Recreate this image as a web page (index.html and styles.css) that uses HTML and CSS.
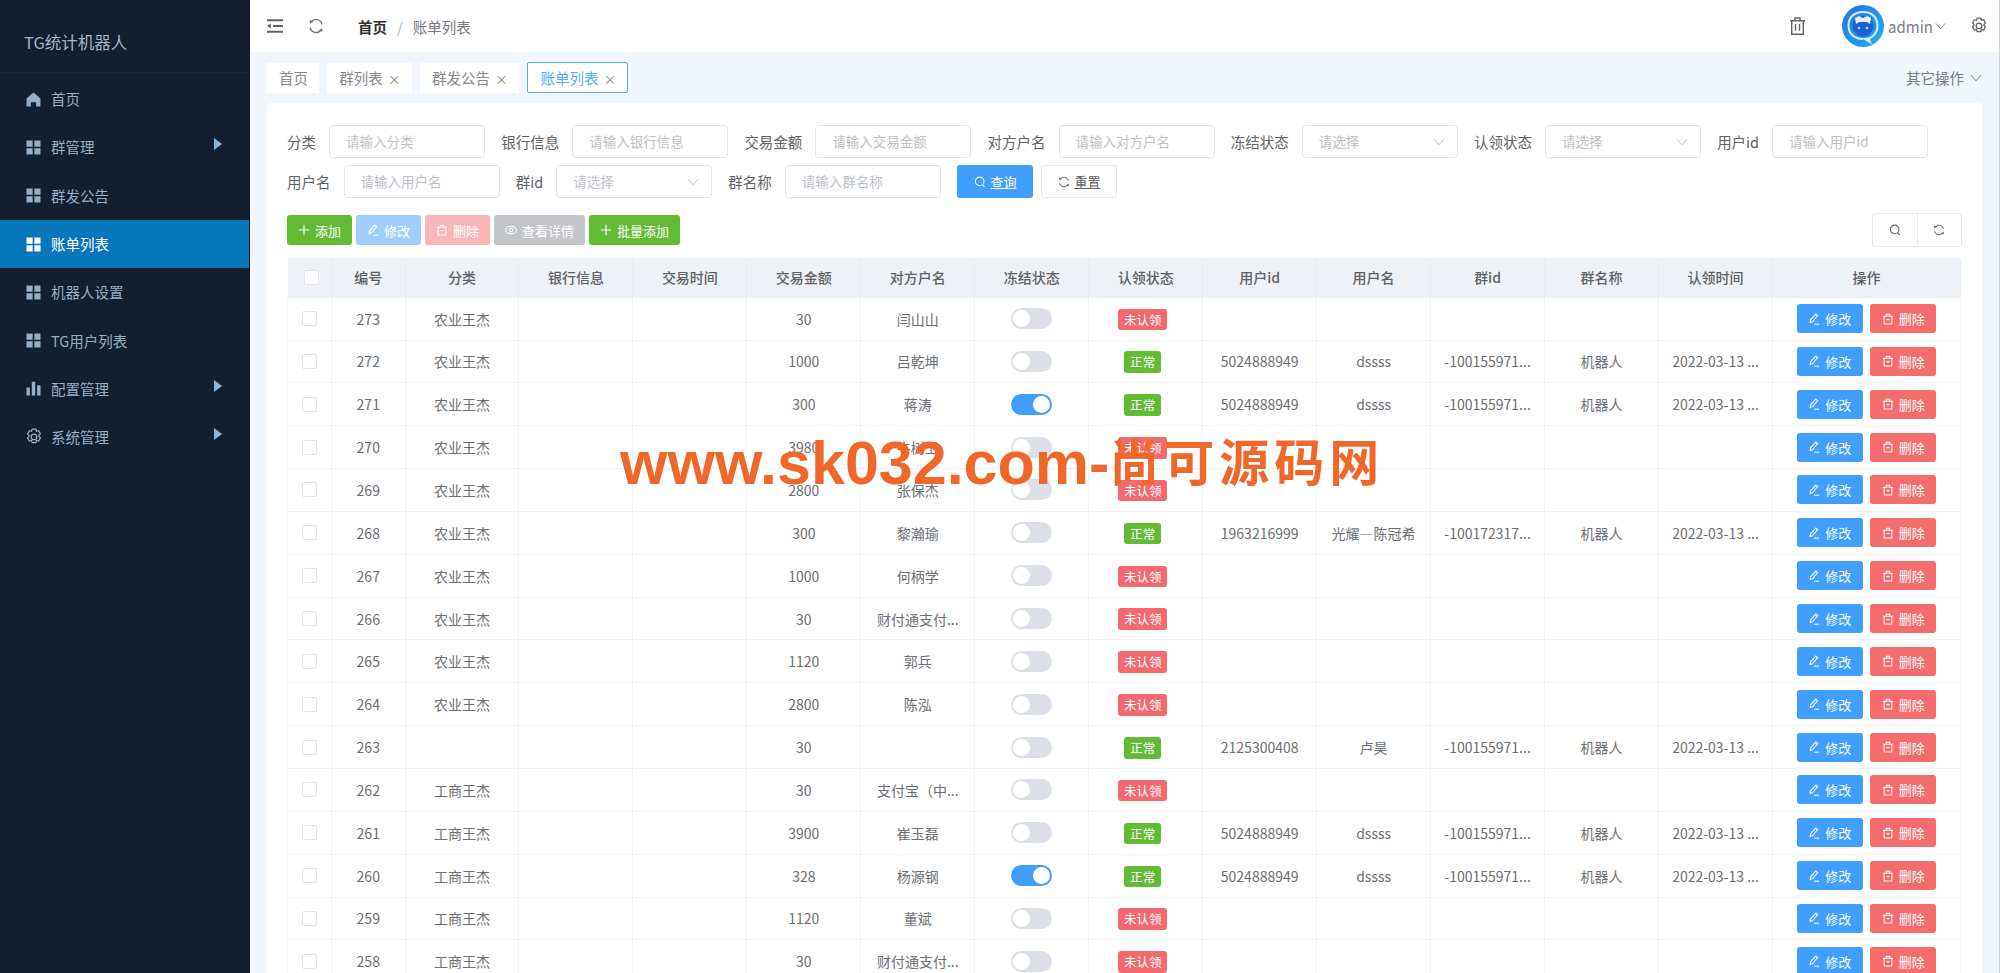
FILE: index.html
```html
<!DOCTYPE html>
<html lang="zh-CN">
<head>
    <meta charset="UTF-8">
    <meta name="viewport" content="width=device-width, initial-scale=1.0">
    <title>账单列表 - TG统计机器人</title>
    <link rel="stylesheet" href="styles.css">
</head>
<body>
    <svg class="sprite" xmlns="http://www.w3.org/2000/svg">
        <symbol id="i-home" viewBox="0 0 16 16"><path d="M8 .6 15.4 7v8.4h-4.6v-4.6H5.2v4.6H.6V7z" fill="currentColor"/></symbol>
        <symbol id="i-grid" viewBox="0 0 16 16"><path d="M.5.5h6.6v6.6H.5zM8.9.5h6.6v6.6H8.9zM.5 8.9h6.6v6.6H.5zM8.9 8.9h6.6v6.6H8.9z" fill="currentColor"/></symbol>
        <symbol id="i-bars" viewBox="0 0 16 16"><path d="M.5 7h3.6v8.5H.5zM6.2.8h3.6v14.7H6.2zM11.9 4.6h3.6v10.9h-3.6z" fill="currentColor"/></symbol>
        <symbol id="i-gear" viewBox="0 0 16 16"><g fill="none" stroke="currentColor" stroke-width="1.1"><path d="M6.4 1h3.2l.6 1.9 1.9-.5 1.6 2.8-1.3 1.4.1.4-.1.4 1.3 1.4-1.6 2.8-1.9-.5-.6 1.9H6.4l-.6-1.9-1.9.5-1.6-2.8 1.3-1.4-.1-.4.1-.4L2.3 5.2l1.6-2.8 1.9.5z"/><circle cx="8" cy="7.900" r="2.500"/></g></symbol>
        <symbol id="i-fold" viewBox="0 0 16 14"><path d="M0 .2h16v2.100H0zM0 11.700h16v2.100H0zM6 5.900h10v2.100H6z" fill="currentColor"/><path d="M0 7l3.800-2.500v5z" fill="currentColor"/></symbol>
        <symbol id="i-refresh" viewBox="0 0 16 16"><g fill="none" stroke="currentColor" stroke-width="1.3"><path d="M2 9.500A6.200 6.200 0 0 0 13 12"/><path d="M14 6.500A6.200 6.200 0 0 0 3 4"/></g><path d="M10.600 12.600 14.400 14l-.3-4zM5.400 3.400 1.600 2l.3 4z" fill="currentColor"/></symbol>
        <symbol id="i-trash" viewBox="0 0 16 18"><g fill="none" stroke="currentColor" stroke-width="1.4"><path d="M.5 3.700h15M5.400 3.700V1h5.200v2.700M2.200 3.700v13.600h11.600V3.700M6 7v6.800M10 7v6.800"/></g></symbol>
        <symbol id="i-search" viewBox="0 0 14 14"><g fill="none" stroke="currentColor" stroke-width="1.2"><circle cx="6.600" cy="6.300" r="5"/><path d="m10 10 2.200 2.600"/></g></symbol>
        <symbol id="i-edit" viewBox="0 0 14 14"><g fill="none" stroke="currentColor" stroke-width="1.2"><path d="M9.200 1.200 11.300 3 5.200 10.200l-2.700.8.300-2.800z"/><path d="M7 13h6"/></g></symbol>
        <symbol id="i-del" viewBox="0 0 14 14"><g fill="none" stroke="currentColor" stroke-width="1.2"><path d="M1 3.800h12M5 3.800V1.400h4v2.400M2.500 3.800v9h9v-9"/><path d="M5 7.800h4"/></g></symbol>
        <symbol id="i-eye" viewBox="0 0 14 14"><g fill="none" stroke="currentColor" stroke-width="1.2"><ellipse cx="7" cy="7" rx="6.200" ry="4.300"/><circle cx="7" cy="7" r="2"/></g></symbol>
        <symbol id="i-plus" viewBox="0 0 14 14"><path d="M7 1v12M1 7h12" fill="none" stroke="currentColor" stroke-width="1.3"/></symbol>
        <symbol id="i-down" viewBox="0 0 12 8"><path d="M1 1.200 6 6.800l5-5.600" fill="none" stroke="currentColor" stroke-width="1"/></symbol>
    </svg>

    <div class="app">
        <aside class="sidebar">
            <div class="logo">TG统计机器人</div>
            <ul class="menu">
                <li class="menu-item"><svg class="menu-icon"><use href="#i-home"/></svg>首页</li>
                <li class="menu-item has-sub"><svg class="menu-icon"><use href="#i-grid"/></svg>群管理</li>
                <li class="menu-item"><svg class="menu-icon"><use href="#i-grid"/></svg>群发公告</li>
                <li class="menu-item active"><svg class="menu-icon"><use href="#i-grid"/></svg>账单列表</li>
                <li class="menu-item"><svg class="menu-icon"><use href="#i-grid"/></svg>机器人设置</li>
                <li class="menu-item"><svg class="menu-icon"><use href="#i-grid"/></svg>TG用户列表</li>
                <li class="menu-item has-sub"><svg class="menu-icon"><use href="#i-bars"/></svg>配置管理</li>
                <li class="menu-item has-sub"><svg class="menu-icon gear"><use href="#i-gear"/></svg>系统管理</li>
            </ul>
        </aside>

        <main class="main">
            <header class="navbar">
                <svg class="nav-fold"><use href="#i-fold"/></svg>
                <svg class="nav-refresh"><use href="#i-refresh"/></svg>
                <div class="crumbs"><b>首页</b><span class="crumb-sep">/</span><span>账单列表</span></div>
                <svg class="nav-trash"><use href="#i-trash"/></svg>
                <svg class="avatar" viewBox="0 0 42 42" xmlns="http://www.w3.org/2000/svg">
                    <defs>
                        <linearGradient id="av" x1="0" y1="0" x2="1" y2="1">
                            <stop offset="0" stop-color="#2a6fe0"/>
                            <stop offset="1" stop-color="#1cb4ee"/>
                        </linearGradient>
                    </defs>
                    <circle cx="21" cy="21" r="21" fill="url(#av)"/>
                    <path d="M21 7c9 0 14.500 5.500 14.500 13.500S30 34 23 34l5 3-1-3" fill="none" stroke="#d4f0ff" stroke-width="2"/>
                    <path d="M21 34C12 34 6.500 28.500 6.500 20.500S12 7 21 7" fill="none" stroke="#d4f0ff" stroke-width="2"/>
                    <circle cx="21" cy="21" r="10.500" fill="#1d62d0"/>
                    <path d="M13 13l4-2 4 2 4-2 4 2-1 6-3-2h-8l-3 2z" fill="#e8f4ff"/>
                    <circle cx="17" cy="23" r="1.300" fill="#9fd4ff"/>
                    <circle cx="25" cy="23" r="1.300" fill="#9fd4ff"/>
                </svg>
                <span class="nav-user">admin</span>
                <svg class="nav-down"><use href="#i-down"/></svg>
                <svg class="nav-gear"><use href="#i-gear"/></svg>
            </header>

            <div class="tabs">
                <span class="tab">首页</span>
                <span class="tab">群列表<i class="tab-x">×</i></span>
                <span class="tab">群发公告<i class="tab-x">×</i></span>
                <span class="tab current">账单列表<i class="tab-x">×</i></span>
                <span class="tabs-more">其它操作<svg class="more-down"><use href="#i-down"/></svg></span>
            </div>

            <section class="card">
                <form class="filters">
                    <label class="field">分类<span class="input">请输入分类</span></label>
                    <label class="field">银行信息<span class="input">请输入银行信息</span></label>
                    <label class="field">交易金额<span class="input">请输入交易金额</span></label>
                    <label class="field">对方户名<span class="input">请输入对方户名</span></label>
                    <label class="field">冻结状态<span class="input select">请选择<svg class="select-arrow"><use href="#i-down"/></svg></span></label>
                    <label class="field">认领状态<span class="input select">请选择<svg class="select-arrow"><use href="#i-down"/></svg></span></label>
                    <label class="field">用户id<span class="input">请输入用户id</span></label>
                    <label class="field">用户名<span class="input">请输入用户名</span></label>
                    <label class="field">群id<span class="input select">请选择<svg class="select-arrow"><use href="#i-down"/></svg></span></label>
                    <label class="field">群名称<span class="input">请输入群名称</span></label>
                    <div class="filter-btns">
                        <span class="btn-query"><svg class="btn-icon"><use href="#i-search"/></svg>查询</span>
                        <span class="btn-reset"><svg class="btn-icon"><use href="#i-refresh"/></svg>重置</span>
                    </div>
                </form>

                <div class="toolbar">
                    <div class="tool-btns">
                        <span class="btn green"><svg class="btn-icon"><use href="#i-plus"/></svg>添加</span>
                        <span class="btn blue-off"><svg class="btn-icon"><use href="#i-edit"/></svg>修改</span>
                        <span class="btn red-off"><svg class="btn-icon"><use href="#i-del"/></svg>删除</span>
                        <span class="btn grey-off"><svg class="btn-icon"><use href="#i-eye"/></svg>查看详情</span>
                        <span class="btn green"><svg class="btn-icon"><use href="#i-plus"/></svg>批量添加</span>
                    </div>
                    <div class="tool-right">
                        <span class="tool-square"><svg class="btn-icon"><use href="#i-search"/></svg></span>
                        <span class="tool-square"><svg class="btn-icon"><use href="#i-refresh"/></svg></span>
                    </div>
                </div>

                <table class="grid">
                    <colgroup>
                        <col class="col-check"><col class="col-no"><col span="12"><col class="col-ops">
                    </colgroup>
                    <thead>
                        <tr>
                            <th><span class="check head-check"></span></th>
                            <th>编号</th><th>分类</th><th>银行信息</th><th>交易时间</th><th>交易金额</th><th>对方户名</th>
                            <th>冻结状态</th><th>认领状态</th><th>用户id</th><th>用户名</th><th>群id</th><th>群名称</th><th>认领时间</th><th>操作</th>
                        </tr>
                    </thead>
                    <tbody>
                        <tr><td><span class="check"></span></td><td>273</td><td>农业王杰</td><td></td><td></td><td>30</td><td>闫山山</td><td><span class="switch"></span></td><td><span class="tag no">未认领</span></td><td></td><td></td><td></td><td></td><td></td><td><span class="op edit"><svg class="btn-icon"><use href="#i-edit"/></svg>修改</span><span class="op del"><svg class="btn-icon"><use href="#i-del"/></svg>删除</span></td></tr>
                        <tr><td><span class="check"></span></td><td>272</td><td>农业王杰</td><td></td><td></td><td>1000</td><td>吕乾坤</td><td><span class="switch"></span></td><td><span class="tag ok">正常</span></td><td>5024888949</td><td>dssss</td><td>-100155971...</td><td>机器人</td><td>2022-03-13 ...</td><td><span class="op edit"><svg class="btn-icon"><use href="#i-edit"/></svg>修改</span><span class="op del"><svg class="btn-icon"><use href="#i-del"/></svg>删除</span></td></tr>
                        <tr><td><span class="check"></span></td><td>271</td><td>农业王杰</td><td></td><td></td><td>300</td><td>蒋涛</td><td><span class="switch on"></span></td><td><span class="tag ok">正常</span></td><td>5024888949</td><td>dssss</td><td>-100155971...</td><td>机器人</td><td>2022-03-13 ...</td><td><span class="op edit"><svg class="btn-icon"><use href="#i-edit"/></svg>修改</span><span class="op del"><svg class="btn-icon"><use href="#i-del"/></svg>删除</span></td></tr>
                        <tr><td><span class="check"></span></td><td>270</td><td>农业王杰</td><td></td><td></td><td>3980</td><td>牛树卫</td><td><span class="switch"></span></td><td><span class="tag no">未认领</span></td><td></td><td></td><td></td><td></td><td></td><td><span class="op edit"><svg class="btn-icon"><use href="#i-edit"/></svg>修改</span><span class="op del"><svg class="btn-icon"><use href="#i-del"/></svg>删除</span></td></tr>
                        <tr><td><span class="check"></span></td><td>269</td><td>农业王杰</td><td></td><td></td><td>2800</td><td>张保杰</td><td><span class="switch"></span></td><td><span class="tag no">未认领</span></td><td></td><td></td><td></td><td></td><td></td><td><span class="op edit"><svg class="btn-icon"><use href="#i-edit"/></svg>修改</span><span class="op del"><svg class="btn-icon"><use href="#i-del"/></svg>删除</span></td></tr>
                        <tr><td><span class="check"></span></td><td>268</td><td>农业王杰</td><td></td><td></td><td>300</td><td>黎瀚瑜</td><td><span class="switch"></span></td><td><span class="tag ok">正常</span></td><td>1963216999</td><td>光耀—陈冠希</td><td>-100172317...</td><td>机器人</td><td>2022-03-13 ...</td><td><span class="op edit"><svg class="btn-icon"><use href="#i-edit"/></svg>修改</span><span class="op del"><svg class="btn-icon"><use href="#i-del"/></svg>删除</span></td></tr>
                        <tr><td><span class="check"></span></td><td>267</td><td>农业王杰</td><td></td><td></td><td>1000</td><td>何柄学</td><td><span class="switch"></span></td><td><span class="tag no">未认领</span></td><td></td><td></td><td></td><td></td><td></td><td><span class="op edit"><svg class="btn-icon"><use href="#i-edit"/></svg>修改</span><span class="op del"><svg class="btn-icon"><use href="#i-del"/></svg>删除</span></td></tr>
                        <tr><td><span class="check"></span></td><td>266</td><td>农业王杰</td><td></td><td></td><td>30</td><td>财付通支付...</td><td><span class="switch"></span></td><td><span class="tag no">未认领</span></td><td></td><td></td><td></td><td></td><td></td><td><span class="op edit"><svg class="btn-icon"><use href="#i-edit"/></svg>修改</span><span class="op del"><svg class="btn-icon"><use href="#i-del"/></svg>删除</span></td></tr>
                        <tr><td><span class="check"></span></td><td>265</td><td>农业王杰</td><td></td><td></td><td>1120</td><td>郭兵</td><td><span class="switch"></span></td><td><span class="tag no">未认领</span></td><td></td><td></td><td></td><td></td><td></td><td><span class="op edit"><svg class="btn-icon"><use href="#i-edit"/></svg>修改</span><span class="op del"><svg class="btn-icon"><use href="#i-del"/></svg>删除</span></td></tr>
                        <tr><td><span class="check"></span></td><td>264</td><td>农业王杰</td><td></td><td></td><td>2800</td><td>陈泓</td><td><span class="switch"></span></td><td><span class="tag no">未认领</span></td><td></td><td></td><td></td><td></td><td></td><td><span class="op edit"><svg class="btn-icon"><use href="#i-edit"/></svg>修改</span><span class="op del"><svg class="btn-icon"><use href="#i-del"/></svg>删除</span></td></tr>
                        <tr><td><span class="check"></span></td><td>263</td><td></td><td></td><td></td><td>30</td><td></td><td><span class="switch"></span></td><td><span class="tag ok">正常</span></td><td>2125300408</td><td>卢昊</td><td>-100155971...</td><td>机器人</td><td>2022-03-13 ...</td><td><span class="op edit"><svg class="btn-icon"><use href="#i-edit"/></svg>修改</span><span class="op del"><svg class="btn-icon"><use href="#i-del"/></svg>删除</span></td></tr>
                        <tr><td><span class="check"></span></td><td>262</td><td>工商王杰</td><td></td><td></td><td>30</td><td>支付宝（中...</td><td><span class="switch"></span></td><td><span class="tag no">未认领</span></td><td></td><td></td><td></td><td></td><td></td><td><span class="op edit"><svg class="btn-icon"><use href="#i-edit"/></svg>修改</span><span class="op del"><svg class="btn-icon"><use href="#i-del"/></svg>删除</span></td></tr>
                        <tr><td><span class="check"></span></td><td>261</td><td>工商王杰</td><td></td><td></td><td>3900</td><td>崔玉磊</td><td><span class="switch"></span></td><td><span class="tag ok">正常</span></td><td>5024888949</td><td>dssss</td><td>-100155971...</td><td>机器人</td><td>2022-03-13 ...</td><td><span class="op edit"><svg class="btn-icon"><use href="#i-edit"/></svg>修改</span><span class="op del"><svg class="btn-icon"><use href="#i-del"/></svg>删除</span></td></tr>
                        <tr><td><span class="check"></span></td><td>260</td><td>工商王杰</td><td></td><td></td><td>328</td><td>杨源钢</td><td><span class="switch on"></span></td><td><span class="tag ok">正常</span></td><td>5024888949</td><td>dssss</td><td>-100155971...</td><td>机器人</td><td>2022-03-13 ...</td><td><span class="op edit"><svg class="btn-icon"><use href="#i-edit"/></svg>修改</span><span class="op del"><svg class="btn-icon"><use href="#i-del"/></svg>删除</span></td></tr>
                        <tr><td><span class="check"></span></td><td>259</td><td>工商王杰</td><td></td><td></td><td>1120</td><td>董斌</td><td><span class="switch"></span></td><td><span class="tag no">未认领</span></td><td></td><td></td><td></td><td></td><td></td><td><span class="op edit"><svg class="btn-icon"><use href="#i-edit"/></svg>修改</span><span class="op del"><svg class="btn-icon"><use href="#i-del"/></svg>删除</span></td></tr>
                        <tr><td><span class="check"></span></td><td>258</td><td>工商王杰</td><td></td><td></td><td>30</td><td>财付通支付...</td><td><span class="switch"></span></td><td><span class="tag no">未认领</span></td><td></td><td></td><td></td><td></td><td></td><td><span class="op edit"><svg class="btn-icon"><use href="#i-edit"/></svg>修改</span><span class="op del"><svg class="btn-icon"><use href="#i-del"/></svg>删除</span></td></tr>
                    </tbody>
                </table>
            </section>
        </main>
    </div>

    <div class="watermark"><span class="wm-latin">www.sk032.com-</span><span class="wm-cjk">尚可源码网</span></div>
</body>
</html>
```

FILE: styles.css
```css
:root {
    --side-bg: #131f2e;
    --side-text: #98aec4;
    --page-bg: #f1f5fc;
    --text: #606266;
    --line: #eef1f6;
    --blue: #409eff;
    --red: #f56c6c;
    --green: #62bb35;
}

html, body {
    height: 100%;
}

body {
    margin: 0;
    overflow: hidden;
    position: relative;
    font-family: "Noto Sans CJK SC", "Liberation Sans", sans-serif;
    font-size: 14px;
    color: var(--text);
    background: var(--page-bg);
}

.sprite {
    display: none;
}

.app {
    display: flex;
    height: 973px;
    overflow: hidden;
    border-right: 1px solid #cfd2d6;
}

/* 左侧菜单 */
.sidebar {
    flex: 0 0 250px;
    background: var(--side-bg);
    border-right: 1px solid #0f1824;
    box-sizing: border-box;
}

.logo {
    height: 73px;
    line-height: 84px;
    padding-left: 24px;
    font-size: 16.5px;
    color: #a6b4c2;
    border-bottom: 1px solid #18263a;
    box-sizing: border-box;
}

.menu {
    list-style: none;
    margin: 2px 0 0;
    padding: 0;
}

.menu-item {
    height: 48.3px;
    line-height: 46px;
    display: flex;
    align-items: center;
    padding-left: 26px;
    font-size: 14.5px;
    color: var(--side-text);
    position: relative;
}

.menu-item.active {
    background: #0776bb;
    color: #fff;
}

.menu-icon {
    width: 15px;
    height: 15px;
    margin-right: 10px;
    flex: none;
}

.menu-icon.gear {
    width: 18px;
    height: 18px;
    margin: 0 8px 0 -1px;
}

.has-sub::after {
    content: "";
    position: absolute;
    left: 214px;
    top: 15px;
    border-left: 8px solid #8fb4d6;
    border-top: 6px solid transparent;
    border-bottom: 6px solid transparent;
}

/* 顶部 */
.main {
    flex: 1;
    min-width: 0;
    display: flex;
    flex-direction: column;
}

.navbar {
    flex: 0 0 52px;
    background: #fff;
    display: flex;
    align-items: center;
    padding: 0 11px 0 17px;
    color: #606266;
}

.nav-fold {
    width: 16px;
    height: 14px;
    margin-right: 25px;
}

.nav-refresh {
    width: 16px;
    height: 16px;
    margin-right: 34px;
    color: #777;
}

.crumbs {
    flex: 1;
    display: flex;
    align-items: center;
    font-size: 14.5px;
    color: #777a80;
}

.crumbs b {
    color: #303133;
}

.crumb-sep {
    margin: 0 10px;
    color: #b0b3b8;
}

.nav-trash {
    width: 17px;
    height: 18px;
    margin-right: 36px;
}

.avatar {
    width: 42px;
    height: 42px;
    margin-right: 4px;
}

.nav-user {
    font-size: 15px;
    color: #77797d;
}

.nav-down {
    width: 11px;
    height: 8px;
    margin: 0 24px 0 2px;
    color: #777;
}

.nav-gear {
    width: 18px;
    height: 18px;
}

/* 标签页 */
.tabs {
    flex: 0 0 51px;
    display: flex;
    align-items: center;
    gap: 8.3px;
    padding: 0 17px;
    box-sizing: border-box;
}

.tab {
    height: 30px;
    line-height: 30px;
    padding: 0 11px 0 12px;
    background: #fff;
    color: #85888e;
    font-size: 14.5px;
    white-space: nowrap;
}

.tab.current {
    color: #5aa9f5;
    border: 1px solid #5aa9f5;
    height: 31px;
    line-height: 29px;
    box-sizing: border-box;
    border-radius: 2px;
}

.tab-x {
    font-style: normal;
    font-size: 13px;
    margin-left: 5px;
    color: #888;
}

.tabs-more {
    margin-left: auto;
    display: flex;
    align-items: center;
    font-size: 14.5px;
    color: #777a80;
}

.more-down {
    width: 12px;
    height: 8px;
    margin-left: 6px;
}

/* 内容卡片 */
.card {
    flex: 1;
    background: #fff;
    border-radius: 4px 4px 0 0;
    margin: 0 17px;
    padding: 22px 20px 0;
    box-sizing: border-box;
    overflow: hidden;
}

.filters {
    display: flex;
    flex-wrap: wrap;
    gap: 7px 16.2px;
}

.field {
    display: flex;
    align-items: center;
    gap: 13px;
    font-size: 14.5px;
    color: #606266;
    white-space: nowrap;
}

.input {
    width: 156px;
    height: 33px;
    line-height: 31px;
    box-sizing: border-box;
    border: 1px solid #dfe3ea;
    border-radius: 4px;
    padding: 0 16px;
    font-size: 13.5px;
    color: #bcc0c7;
    position: relative;
}

.select-arrow {
    position: absolute;
    right: 12px;
    top: 12px;
    width: 12px;
    height: 8px;
    color: #b8bcc4;
}

.filter-btns {
    display: flex;
    gap: 8px;
}

.btn-query,
.btn-reset {
    height: 33px;
    width: 76px;
    box-sizing: border-box;
    border-radius: 3px;
    display: flex;
    align-items: center;
    justify-content: center;
    font-size: 13px;
    text-decoration: underline;
}

.btn-query {
    background: var(--blue);
    color: #fff;
}

.btn-reset {
    border: 1px solid #e2e5ea;
    color: #606266;
}

.btn-icon {
    width: 12px;
    height: 12px;
    margin-right: 5px;
    flex: none;
}

.toolbar {
    display: flex;
    justify-content: space-between;
    align-items: center;
    margin-top: 15px;
    height: 34px;
}

.tool-btns {
    display: flex;
    gap: 4px;
}

.btn {
    height: 30px;
    padding: 0 11px;
    box-sizing: border-box;
    border-radius: 3px;
    display: flex;
    align-items: center;
    font-size: 13px;
    color: #fff;
}

.green {
    background: var(--green);
}

.blue-off {
    background: #a0cfff;
}

.red-off {
    background: #fab6b6;
}

.grey-off {
    background: #c3c5c9;
}

.tool-right {
    width: 90px;
    height: 34px;
    box-sizing: border-box;
    border: 1px solid #e6e8ec;
    border-radius: 3px;
    display: flex;
    color: #606266;
}

.tool-square {
    flex: 1;
    display: flex;
    align-items: center;
    justify-content: center;
}

.tool-square + .tool-square {
    border-left: 1px solid #e6e8ec;
}

.tool-square .btn-icon {
    margin: 0;
}

/* 表格 */
.grid {
    width: 1674px;
    margin-top: 10.7px;
    table-layout: fixed;
    border-collapse: collapse;
}

.col-check {
    width: 44px;
}

.col-no {
    width: 73.5px;
}

.col-ops {
    width: 188px;
}

.grid th,
.grid td {
    padding: 0;
    text-align: center;
    white-space: nowrap;
    overflow: hidden;
    border-bottom: 1px solid var(--line);
    border-right: 1px solid var(--line);
    font-size: 14px;
}

.grid th {
    height: 39px;
    background: #eef1f6;
    font-weight: 500;
    color: #5e6166;
    border-color: #e9ecf1;
}

.grid td {
    height: 41.85px;
    color: #6b6e73;
}

.grid td:first-child {
    border-left: 1px solid var(--line);
}

.check {
    display: block;
    width: 15px;
    height: 15px;
    margin: 0 auto;
    box-sizing: border-box;
    border: 1px solid #dfe2e8;
    border-radius: 2px;
    background: #fff;
}

.head-check {
    position: relative;
    left: 2px;
}

.switch {
    display: block;
    width: 41.5px;
    height: 21px;
    margin: 0 auto;
    border-radius: 11px;
    background: #dcdfe6;
    position: relative;
}

.switch::after {
    content: "";
    position: absolute;
    left: 2px;
    top: 2px;
    width: 17px;
    height: 17px;
    border-radius: 50%;
    background: #fff;
}

.switch.on {
    background: var(--blue);
}

.switch.on::after {
    left: 22.5px;
}

.tag {
    display: inline-block;
    height: 21.5px;
    line-height: 21.5px;
    padding: 0 6px;
    margin-right: 6px;
    border-radius: 3px;
    color: #fff;
    font-size: 12.5px;
    vertical-align: middle;
}

.tag.no {
    background: #f4696d;
}

.tag.ok {
    background: var(--green);
}

.op {
    display: inline-flex;
    align-items: center;
    justify-content: center;
    width: 66px;
    height: 29px;
    border-radius: 3px;
    color: #fff;
    font-size: 13px;
    vertical-align: middle;
}

.op + .op {
    margin-left: 7.5px;
}

.edit {
    background: var(--blue);
}

.del {
    background: #f56c6c;
}

/* 水印 */
.watermark {
    position: absolute;
    left: 620px;
    top: 426px;
    display: flex;
    align-items: baseline;
    color: #f0672a;
    font-weight: 700;
    white-space: nowrap;
}

.wm-latin {
    font-family: "Liberation Sans", sans-serif;
    font-size: 61px;
}

.wm-cjk {
    font-family: "Noto Sans CJK SC", sans-serif;
    font-size: 50px;
    letter-spacing: 5px;
    position: relative;
    top: -3px;
}
```
